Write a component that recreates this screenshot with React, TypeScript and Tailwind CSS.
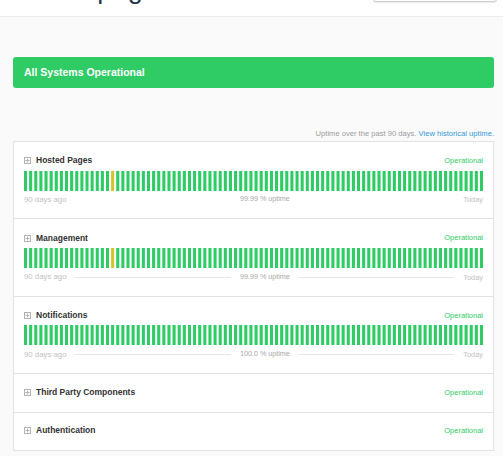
import React from "react";

const FONT = { fontFamily: '"Liberation Sans", Arial, sans-serif' };

type Comp = {
  name: string;
  uptime?: string;
  yellow?: number[];
  lines?: boolean;
};

const comps: Comp[] = [
  { name: "Hosted Pages", uptime: "99.99", yellow: [17], lines: false },
  { name: "Management", uptime: "99.99", yellow: [17], lines: true },
  { name: "Notifications", uptime: "100.0", yellow: [], lines: true },
  { name: "Third Party Components" },
  { name: "Authentication" },
];

function PlusBox() {
  return (
    <svg width="7" height="7" viewBox="0 0 7 7" className="shrink-0">
      <rect x="0.5" y="0.5" width="6" height="6" fill="none" stroke="#b4b4b4" strokeWidth="1" />
      <line x1="1.5" y1="3.5" x2="5.5" y2="3.5" stroke="#b4b4b4" strokeWidth="1" />
      <line x1="3.5" y1="1.5" x2="3.5" y2="5.5" stroke="#b4b4b4" strokeWidth="1" />
    </svg>
  );
}

function Bars({ yellow }: { yellow: number[] }) {
  return (
    <svg width="100%" height="20" viewBox="0 0 448 20" preserveAspectRatio="none" className="block">
      {Array.from({ length: 90 }).map((_, i) => (
        <rect
          key={i}
          x={i * 5}
          y={0}
          width={3}
          height={20}
          fill={yellow.includes(i) ? "#d2c52c" : "#2fcc66"}
        />
      ))}
    </svg>
  );
}

function NameRow({ name }: { name: string }) {
  return (
    <div className="flex items-center h-[12px]">
      <PlusBox />
      <span className="ml-[5px] text-[8.5px] font-bold text-[#333]">{name}</span>
      <span className="ml-auto text-[7.5px] text-[#2fcc66]">Operational</span>
    </div>
  );
}

export default function App() {
  return (
    <div className="w-[503px] h-[456px] overflow-hidden bg-[#fafafa]" style={FONT}>
      {/* header (scrolled) */}
      <div className="h-[17px] overflow-hidden bg-white border-b border-[#ececec]">
        <div className="-mt-[24px] flex items-start justify-between pl-[24px] pr-[6px]">
          <span className="text-[27px] leading-[27px] font-light text-[#27374d] tracking-[0.2px]">statuspage</span>
          <div className="w-[124px] h-[26px] bg-white border border-[#cfcfcf] rounded-[3px] shadow-[0_1px_1px_rgba(0,0,0,0.08)]" />
        </div>
      </div>

      <div className="pl-[13px] pr-[9px]">
        {/* banner */}
        <div className="mt-[40px] h-[31px] rounded-[3px] bg-[#2fcc66] flex items-center pl-[11px]">
          <span className="text-[10.5px] font-bold text-white">All Systems Operational</span>
        </div>

        {/* uptime note */}
        <div className="mt-[41px] mb-[2px] h-[10px] leading-[10px] text-right text-[7.6px] text-[#9a9a9a]">
          Uptime over the past 90 days. <span className="text-[#3498db]">View historical uptime.</span>
        </div>

        {/* components */}
        <div className="bg-white border border-[#e2e2e2]">
          {comps.map((c, idx) =>
            c.uptime ? (
              <div
                key={c.name}
                className={`px-[10px] pt-[12.7px] pb-[13.7px] ${idx > 0 ? "border-t border-[#e2e2e2]" : ""}`}
              >
                <NameRow name={c.name} />
                <div className="mt-[4px]">
                  <Bars yellow={c.yellow || []} />
                </div>
                <div className="mt-[4px] h-[10px] flex items-center">
                  <span className="text-[7.8px] text-[#c2c2c2]">90 days ago</span>
                  <div className={`flex-1 mx-[9px] h-px ${c.lines ? "bg-[#e6e6e6]" : ""}`} />
                  <span className="text-[7.2px] text-[#a8a8a8]">{c.uptime} % uptime</span>
                  <div className={`flex-1 mx-[9px] h-px ${c.lines ? "bg-[#e6e6e6]" : ""}`} />
                  <span className="text-[7.4px] text-[#c2c2c2]">Today</span>
                </div>
              </div>
            ) : (
              <div
                key={c.name}
                className="px-[10px] pt-[12.2px] pb-[13.3px] border-t border-[#e2e2e2]"
              >
                <NameRow name={c.name} />
              </div>
            )
          )}
        </div>
      </div>
    </div>
  );
}
